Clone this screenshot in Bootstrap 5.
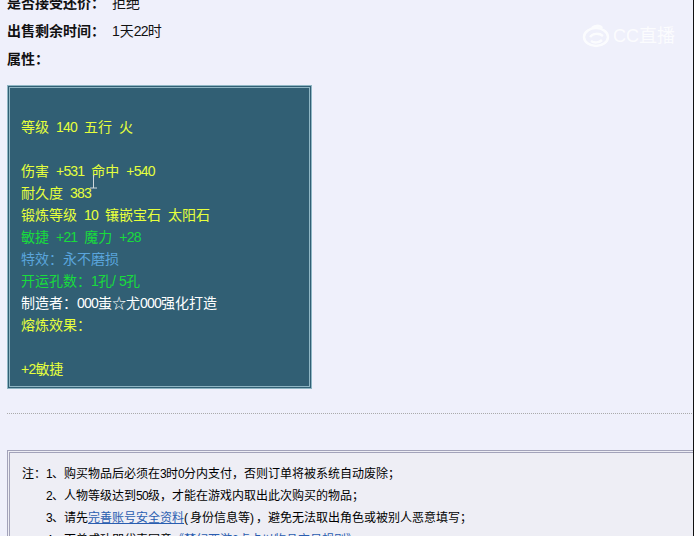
<!DOCTYPE html>
<html lang="zh"><head><meta charset="utf-8">
<link href="https://cdn.jsdelivr.net/npm/bootstrap@5.3.0/dist/css/bootstrap.min.css" rel="stylesheet">
<style>
html,body{height:536px;overflow:hidden}
body{background:#eff0fb;color:#111;font-family:"Liberation Sans","Noto Sans CJK SC",sans-serif;font-size:14px;line-height:28px}
.pg{height:547px;overflow:hidden;margin-top:-11px;position:relative}
.fld{padding-left:7px;height:28px}
.fld b{font-weight:700;margin-right:7px}
.m{letter-spacing:-.8px;word-spacing:3.9px}
.sl{letter-spacing:3.1px}
.stat{width:305px;height:304px;margin:12px 0 0 7px;background:#315f74;border:3px double #8fb6c4;padding:6px 11px;font-size:14px;line-height:22px;color:#e6ff3c;white-space:pre;word-spacing:3.1px}
.gn{color:#18dc3c}.bl{color:#5aa5dc}.wt{color:#fff}
.dots{margin:24px 2px 0 7px;border-top:1px dotted #aaa}
.note{margin:36px 0 0 7px;background:#eeeef5;border:3px double #a3a3ba;border-right:0;padding:10px 12px;font-size:12px;line-height:22px;height:200px;color:#000}
.note a{color:#2a5db0;text-decoration:underline}
.n{letter-spacing:-.67px}
.pr{letter-spacing:2px}
.ln{padding-left:24px}
.mk{position:absolute;left:582px;top:33px;color:#fff;font-size:18px;line-height:28px;gap:3px;opacity:.8}
.edge{position:absolute;right:0;top:0;height:536px;width:1px;background:#111}
.cur{position:absolute;left:90px;top:186px}
</style></head><body>
<div class="pg">
<div class="fld"><b>是否接受还价：</b>拒绝</div>
<div class="fld"><b>出售剩余时间：</b>1天<span class="m">22</span>时</div>
<div class="fld"><b>属性：</b></div>
<div class="stat">
等级 <span class="m">140</span> 五行 火

伤害 <span class="m">+531</span> 命中 <span class="m">+540</span>
耐久度 <span class="m">383</span>
锻炼等级 <span class="m">10</span> 镶嵌宝石 太阳石
<span class="gn">敏捷 <span class="m">+21</span> 魔力 <span class="m">+28</span></span>
<span class="bl">特效：永不磨损</span>
<span class="gn">开运孔数：<span class="m">1</span>孔<span class="sl">/</span><span class="m">5</span>孔</span>
<span class="wt">制造者：<span class="m">000</span>蚩☆尤<span class="m">000</span>强化打造</span>
熔炼效果：

<span class="m">+2</span>敏捷</div>
<div class="dots"></div>
<div class="note">
<div>注：<span class="n">1</span>、购买物品后必须在<span class="n">3</span>时<span class="n">0</span>分内支付，否则订单将被系统自动废除；</div>
<div class="ln"><span class="n">2</span>、人物等级达到<span class="n">50</span>级，才能在游戏内取出此次购买的物品；</div>
<div class="ln"><span class="n">3</span>、请先<a href="#">完善账号安全资料</a><span class="pr">(</span>身份信息等<span class="pr">)</span>，避免无法取出角色或被别人恶意填写；</div>
<div class="ln"><span class="n">4</span>、百兽成功即代表同意<a href="#">《梦幻西游<span class="n">2</span>点卡以物品交易规则》</a></div>
</div>
<div class="mk d-flex align-items-center">
<svg width="28" height="24" viewBox="0 0 28 24" fill="none" stroke="#fff" stroke-width="2.5"><ellipse cx="14" cy="13" rx="12" ry="9"/><path d="M8 13c3-4 9-4 13-1M9 17c3 2 8 2 11-1M10 4c3-3 8-3 10 0"/></svg>
<span>CC直播</span>
</div>
<svg class="cur" width="7" height="14" viewBox="0 0 7 14" fill="none" stroke="#cfd8dc" stroke-width="1"><path d="M3.5 0v13M0 13h7"/></svg>
</div>
<div class="edge"></div>
</body></html>
